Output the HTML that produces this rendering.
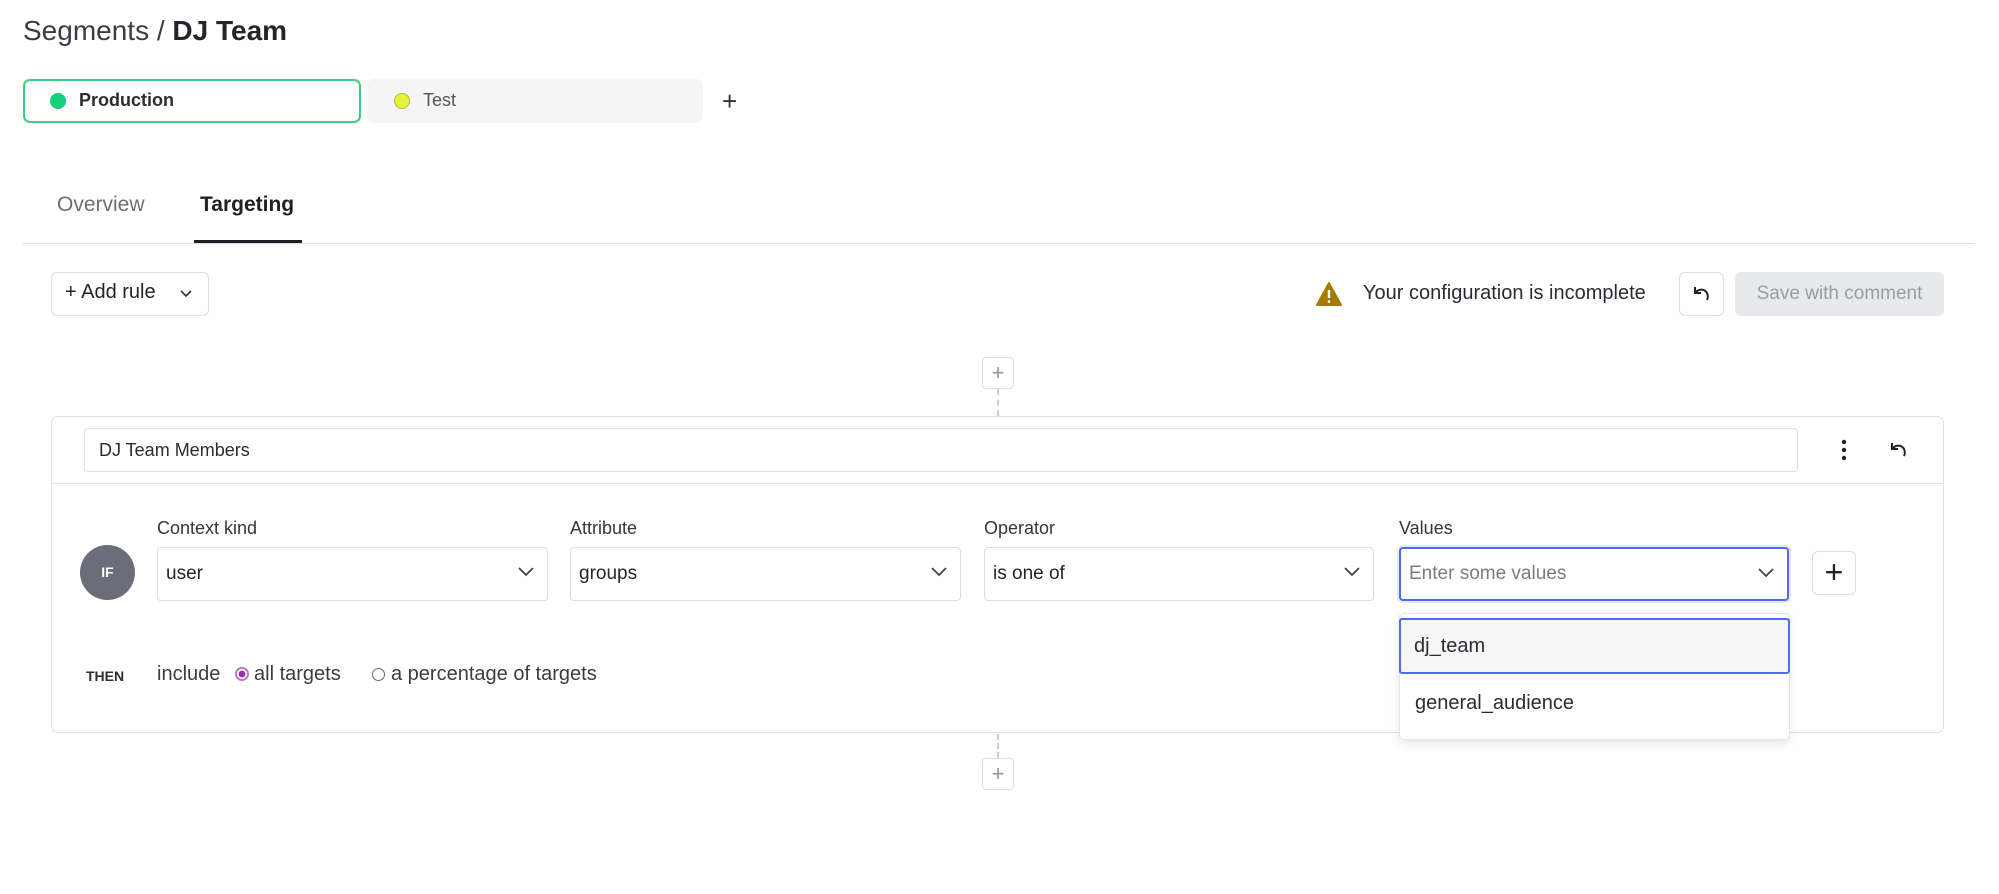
<!DOCTYPE html>
<html><head><meta charset="utf-8"><style>
*{box-sizing:border-box;margin:0;padding:0}
body{width:1999px;height:894px;background:#fff;font-family:"Liberation Sans",sans-serif;color:#23252a;position:relative;overflow:hidden}
.a{position:absolute}
.sel{position:absolute;top:547px;height:54px;border:1px solid #dcdde1;border-radius:4px;font-size:19px;padding-left:8px;line-height:52px;color:#23252a}
.sel svg{position:absolute;right:12px;top:18px}
.lbl{position:absolute;top:518px;font-size:18px;color:#33363c}
.btn{position:absolute;border:1px solid #dcdde1;border-radius:6px;background:#fff}
</style></head><body>
<div class="a" style="left:23px;top:15px;font-size:28px;color:#3a3d44">Segments / <b style="color:#23252a">DJ Team</b></div>

<div class="a" style="left:23px;top:79px;width:338px;height:44px;border:2px solid #3ccf7f;border-radius:7px"></div>
<div class="a" style="left:50px;top:93px;width:16px;height:16px;border-radius:50%;background:#12d07a"></div>
<div class="a" style="left:79px;top:90px;font-size:18px;font-weight:bold;color:#2b2d33">Production</div>
<div class="a" style="left:367px;top:79px;width:336px;height:44px;background:#f5f5f6;border-radius:7px"></div>
<div class="a" style="left:394px;top:93px;width:16px;height:16px;border-radius:50%;background:#e6f23c;border:1px solid #b5bd2a"></div>
<div class="a" style="left:423px;top:90px;font-size:18px;color:#555">Test</div>
<div class="a" style="left:722px;top:86px;font-size:26px;color:#333">+</div>

<div class="a" style="left:57px;top:193px;font-size:21px;color:#6b6e76">Overview</div>
<div class="a" style="left:200px;top:193px;font-size:21px;font-weight:bold;color:#1e2025">Targeting</div>
<div class="a" style="left:23px;top:243px;width:1951px;height:1px;background:#dcdde1"></div>
<div class="a" style="left:194px;top:240px;width:108px;height:3px;background:#1e2025"></div>

<div class="btn" style="left:51px;top:272px;width:158px;height:44px"></div>
<div class="a" style="left:65px;top:281px;font-size:20px;color:#23252a">+ Add rule</div>
<svg class="a" style="left:179px;top:289px" width="14" height="10"><path d="M2 2l5 5 5-5" fill="none" stroke="#333" stroke-width="1.6"/></svg>

<svg class="a" style="left:1315px;top:281px" width="28" height="26"><path d="M14 2L26 24H2Z" fill="#a67c00" stroke="#a67c00" stroke-width="2" stroke-linejoin="round"/><path d="M14 9v8" stroke="#fff" stroke-width="2.4"/><circle cx="14" cy="20.5" r="1.3" fill="#fff"/></svg>
<div class="a" style="left:1363px;top:282px;font-size:20px;color:#2a2c31">Your configuration is incomplete</div>
<div class="btn" style="left:1679px;top:272px;width:45px;height:44px"></div>
<svg class="a" style="left:1691px;top:284px" width="22" height="20"><path d="M4 3v6h6M4 9c3-4 9-5 12 0 1 2 1 5 0 7" fill="none" stroke="#222" stroke-width="2"/></svg>
<div class="a" style="left:1735px;top:272px;width:209px;height:44px;background:#e8e9ec;border-radius:6px;font-size:19px;color:#9a9ca3;text-align:center;line-height:44px">Save with comment</div>

<div class="btn" style="left:982px;top:357px;width:32px;height:32px;border-radius:4px;text-align:center;line-height:29px;font-size:22px;color:#999">+</div>
<div class="a" style="left:997px;top:389px;height:27px;border-left:2px dashed #ccc"></div>

<div class="a" style="left:51px;top:416px;width:1893px;height:317px;border:1px solid #e0e1e4;border-radius:7px"></div>
<div class="a" style="left:84px;top:428px;width:1714px;height:44px;border:1px solid #dcdde1;border-radius:4px;font-size:18px;line-height:42px;padding-left:14px;color:#2a2c31">DJ Team Members</div>
<svg class="a" style="left:1838px;top:438px" width="12" height="24"><circle cx="6" cy="4" r="2.2" fill="#222"/><circle cx="6" cy="12" r="2.2" fill="#222"/><circle cx="6" cy="20" r="2.2" fill="#222"/></svg>
<svg class="a" style="left:1888px;top:440px" width="22" height="20"><path d="M4 3v6h6M4 9c3-4 9-5 12 0 1 2 1 5 0 7" fill="none" stroke="#222" stroke-width="2"/></svg>
<div class="a" style="left:52px;top:483px;width:1891px;height:1px;background:#e0e1e4"></div>

<div class="a" style="left:80px;top:545px;width:55px;height:55px;border-radius:50%;background:#6b6d78;color:#fff;font-size:14px;font-weight:bold;text-align:center;line-height:55px">IF</div>
<div class="lbl" style="left:157px">Context kind</div>
<div class="lbl" style="left:570px">Attribute</div>
<div class="lbl" style="left:984px">Operator</div>
<div class="lbl" style="left:1399px">Values</div>
<div class="sel" style="left:157px;width:391px">user<svg width="18" height="12"><path d="M2 2l7 7 7-7" fill="none" stroke="#444" stroke-width="1.8"/></svg></div>
<div class="sel" style="left:570px;width:391px">groups<svg width="18" height="12"><path d="M2 2l7 7 7-7" fill="none" stroke="#444" stroke-width="1.8"/></svg></div>
<div class="sel" style="left:984px;width:390px">is one of<svg width="18" height="12"><path d="M2 2l7 7 7-7" fill="none" stroke="#444" stroke-width="1.8"/></svg></div>
<div class="sel" style="left:1399px;width:390px;border:2px solid #4f6bef;color:#7a7c83;line-height:50px;box-shadow:0 0 0 2px #e3e8fd">Enter some values<svg width="18" height="12"><path d="M2 2l7 7 7-7" fill="none" stroke="#444" stroke-width="1.8"/></svg></div>
<div class="btn" style="left:1812px;top:551px;width:44px;height:44px;text-align:center;line-height:40px;font-size:32px;color:#222">+</div>

<div class="a" style="left:86px;top:668px;font-size:14px;font-weight:bold;color:#2a2c31">THEN</div>
<div class="a" style="left:157px;top:663px;font-size:20px;color:#3a3c42">include</div>
<div class="a" style="left:235px;top:667px;width:14px;height:14px;border-radius:50%;border:2px solid #b97ec7;background:radial-gradient(#9b2fae 45%,#fff 50%)"></div>
<div class="a" style="left:254px;top:663px;font-size:20px;color:#3a3c42">all targets</div>
<div class="a" style="left:372px;top:668px;width:13px;height:13px;border-radius:50%;border:1px solid #666"></div>
<div class="a" style="left:391px;top:663px;font-size:20px;color:#3a3c42">a percentage of targets</div>

<div class="a" style="left:1399px;top:613px;width:391px;height:127px;background:#fff;border:1px solid #e3e4e7;border-radius:5px;box-shadow:0 4px 10px rgba(0,0,0,.1)"></div>
<div class="a" style="left:1399px;top:618px;width:391px;height:56px;background:#f6f6f7;border:2px solid #4f6bef;border-radius:3px;font-size:20px;line-height:52px;padding-left:13px;color:#2a2c31">dj_team</div>
<div class="a" style="left:1415px;top:692px;font-size:20px;color:#2a2c31">general_audience</div>

<div class="a" style="left:997px;top:734px;height:24px;border-left:2px dashed #ccc"></div>
<div class="btn" style="left:982px;top:758px;width:32px;height:32px;border-radius:4px;text-align:center;line-height:29px;font-size:22px;color:#999">+</div>
</body></html>
